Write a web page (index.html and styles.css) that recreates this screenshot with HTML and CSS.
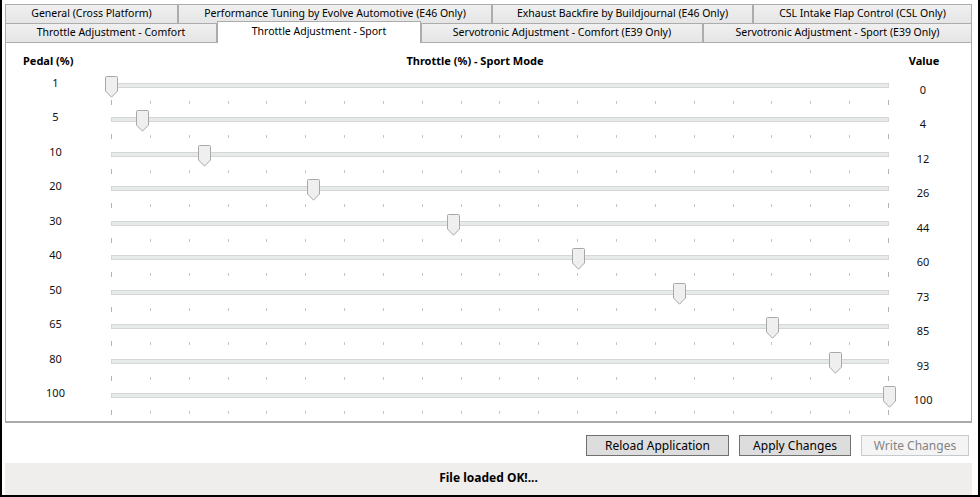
FILE: index.html
```html
<!DOCTYPE html>
<html>

<head>
    <title>Throttle Adjustment - Sport</title>
    <meta charset="utf-8" />
    <link rel="stylesheet" href="styles.css">
</head>

<body>
    <svg width="0" height="0" class="defs">
        <symbol id="thumb" viewBox="0 0 13 22">
            <path d="M1.5,0.5 H11.5 Q12.5,0.5 12.5,1.5 V15 L6.5,21.2 L0.5,15 V1.5 Q0.5,0.5 1.5,0.5 Z" fill="#efefef" stroke="#a8a8a8" stroke-width="1" />
        </symbol>
    </svg>
    <div class="window">
        <div class="tabs">
            <div class="tab-row">
                <div class="tab" style="width:173px">General (Cross Platform)</div>
                <div class="tab" style="width:314px">Performance Tuning by Evolve Automotive (E46 Only)</div>
                <div class="tab" style="width:261px">Exhaust Backfire by Buildjournal (E46 Only)</div>
                <div class="tab" style="width:219px">CSL Intake Flap Control (CSL Only)</div>
            </div>
            <div class="tab-row">
                <div class="tab" style="width:212px">Throttle Adjustment - Comfort</div>
                <div class="tab active" style="width:204px">Throttle Adjustment - Sport</div>
                <div class="tab" style="width:282px">Servotronic Adjustment - Comfort (E39 Only)</div>
                <div class="tab" style="width:269px">Servotronic Adjustment - Sport (E39 Only)</div>
            </div>
        </div>

        <div class="panel">
            <div class="grid head">
                <div class="head-pedal">Pedal (%)</div>
                <div class="head-title">Throttle (%) - Sport Mode</div>
                <div class="head-value">Value</div>
            </div>
            <div id="rows"></div>
        </div>

        <div class="buttons">
            <button class="btn" style="width:143px">Reload Application</button>
            <button class="btn" style="width:112px">Apply Changes</button>
            <button class="btn" style="width:108px" disabled>Write Changes</button>
        </div>

        <div class="status">File loaded OK!...</div>
    </div>

    <script type="text/javascript">
    // pedal % -> throttle %
    var map = [
        [1, 0], [5, 4], [10, 12], [20, 26], [30, 44],
        [40, 60], [50, 73], [65, 85], [80, 93], [100, 100]
    ]

    document.getElementById('rows').innerHTML = map.map(function(r) {
        return `
        <div class="grid row">
            <div class="pedal">${r[0]}</div>
            <div class="slider">
                <div class="track"></div>
                <div class="ticks"></div>
                <svg class="thumb" style="left:${r[1]}%"><use href="#thumb" /></svg>
            </div>
            <div class="value">${r[1]}</div>
        </div>`
    }).join('\n')
    </script>
</body>

</html>
```

FILE: styles.css
```css
html,
body {
    margin: 0;
    padding: 0;
    background: #fff;
}

body {
    font-family: "Noto Sans", "Liberation Sans", sans-serif;
    font-size: 11px;
    color: #111;
}

.defs {
    position: absolute;
}

.window {
    width: 980px;
    height: 497px;
    box-sizing: border-box;
    border-left: 2px solid #000;
    border-right: 2px solid #000;
    border-bottom: 2px solid #000;
    padding: 4px 6px 0 3px;
}

/* tabs */
.tab-row {
    display: flex;
    flex-flow: row nowrap;
    align-items: flex-end;
    height: 19px;
}

.tab {
    box-sizing: border-box;
    height: 19px;
    border: 1px solid #acacac;
    border-bottom: 0;
    background: linear-gradient(#f0f0f0, #e5e5e5);
    text-align: center;
    font-size: 10.5px;
    line-height: 17px;
    white-space: nowrap;
    color: #000;
}

.tab.active {
    position: relative;
    z-index: 1;
    height: 22px;
    margin-top: -2px;
    margin-bottom: -1px;
    background: #fff;
    line-height: 18px;
}

/* panel */
.panel {
    box-sizing: border-box;
    height: 381px;
    border: 1px solid #acacac;
    border-bottom: 2px solid #a9a9a9;
}

.grid {
    display: grid;
    grid-template-columns: 105px 778px 1fr;
}

.head {
    height: 31px;
    padding-top: 10px;
    box-sizing: border-box;
    line-height: 16px;
    font-weight: bold;
    color: #000;
}

.head-pedal {
    padding-left: 17px;
}

.head-title {
    text-align: center;
    padding-right: 50px;
}

.head-value {
    text-align: center;
    padding-right: 12px;
}

.row {
    height: 34.44px;
}

.pedal {
    text-align: center;
    padding-right: 6px;
    line-height: 16px;
    padding-top: 1px;
}

.value {
    text-align: center;
    padding-right: 14px;
    line-height: 16px;
    padding-top: 8px;
}

.slider {
    position: relative;
}

.track {
    margin-top: 9px;
    height: 3px;
    background: #e7eaea;
    border: 1px solid #d6d6d6;
}

.ticks {
    position: relative;
    margin-top: 13px;
    height: 3px;
    background: repeating-linear-gradient(to right, #c6c6c6 0 1px, transparent 1px 38.85px);
}

.ticks::before,
.ticks::after {
    content: "";
    position: absolute;
    top: -1px;
    width: 1px;
    height: 5px;
    background: #b4b4b4;
}

.ticks::before {
    left: 0;
}

.ticks::after {
    right: 0;
}

.thumb {
    position: absolute;
    top: 2px;
    width: 13px;
    height: 22px;
    margin-left: -6px;
}

/* bottom */
.buttons {
    display: flex;
    flex-flow: row nowrap;
    justify-content: flex-end;
    gap: 10px;
    height: 40px;
    box-sizing: border-box;
    padding: 12px 3px 0 0;
}

.btn {
    height: 21px;
    padding: 0;
    font-family: inherit;
    font-size: 12px;
    color: #000;
    background: #dddddd;
    border: 1px solid #707070;
    border-radius: 0;
}

.btn:disabled {
    color: #838383;
    background: #f4f4f4;
    border-color: #c8cbcd;
}

.status {
    height: 32px;
    line-height: 29px;
    text-align: center;
    font-size: 12px;
    font-weight: bold;
    color: #000;
    background: #f0eded;
}
```
